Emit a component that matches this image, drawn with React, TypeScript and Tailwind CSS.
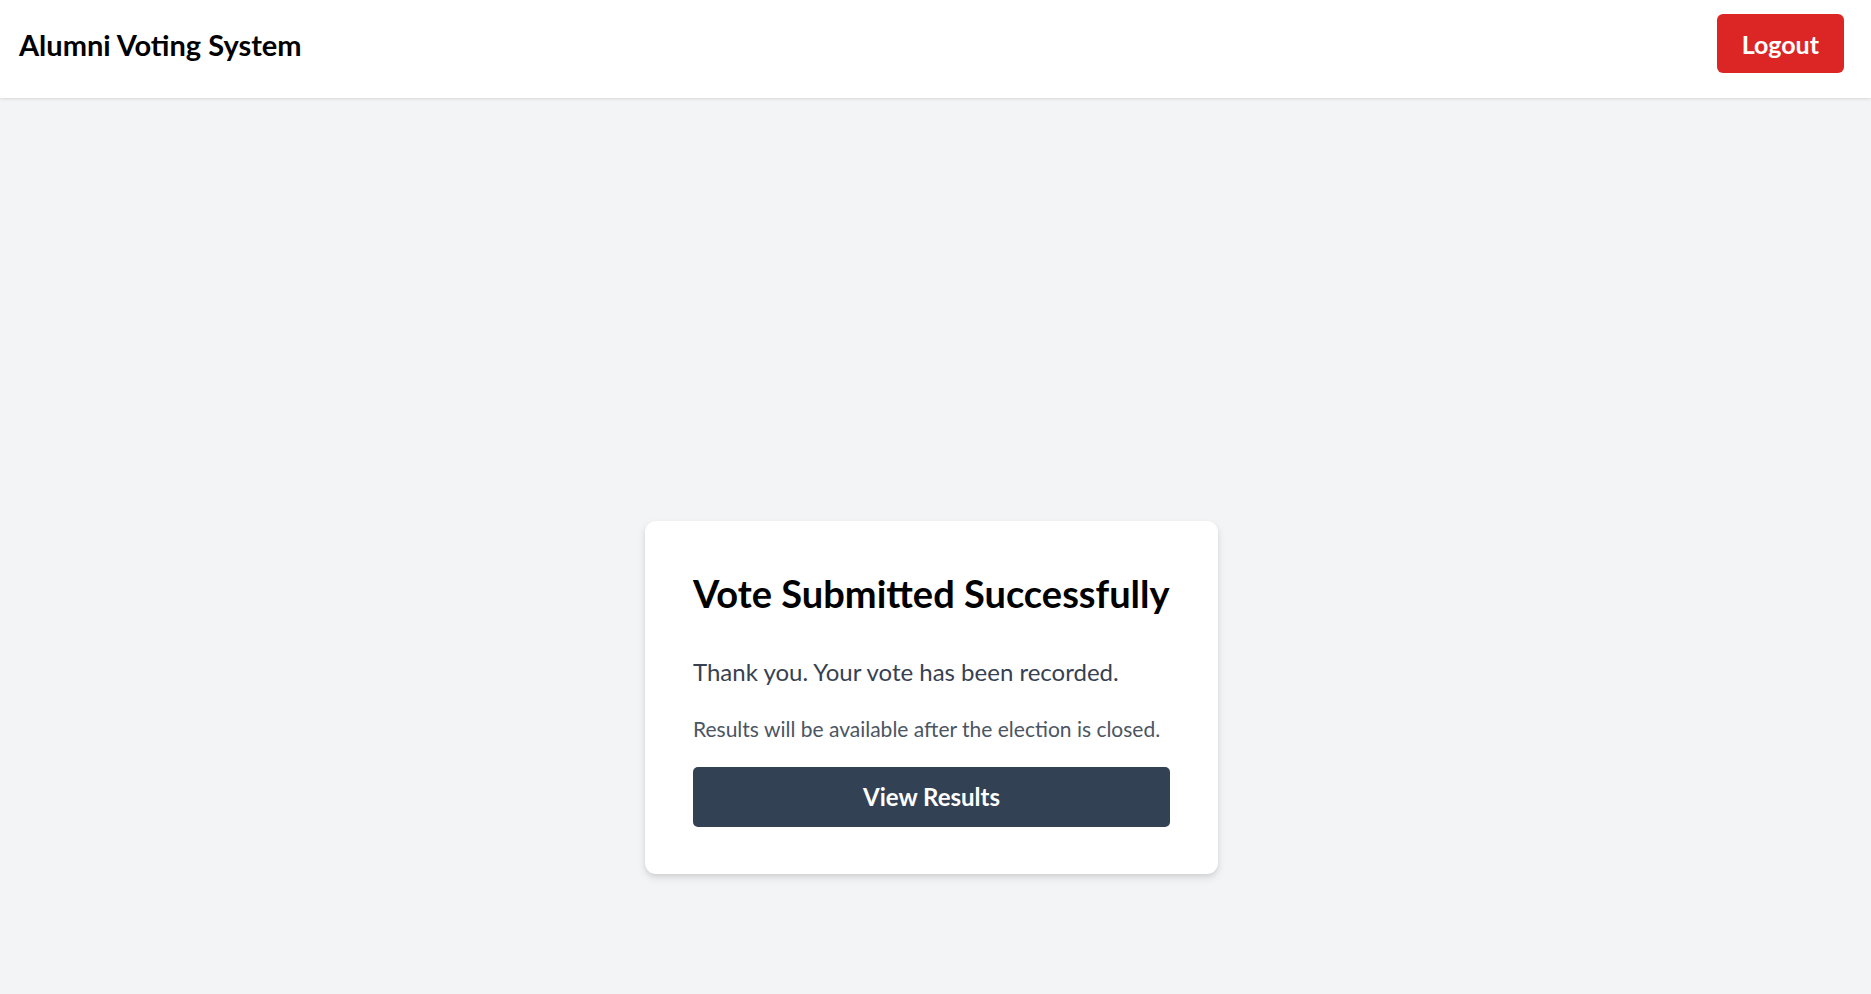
export default function App() {
  return (
    <div className="min-h-screen bg-[#f3f4f6] font-['Lato',sans-serif]">
      <header className="bg-white shadow-[0_1px_3px_rgba(0,0,0,0.12)] flex items-center justify-between pl-[19px] pr-[27px] pt-[14px] pb-[25px]">
        <h1 className="text-[29px] font-bold text-black leading-none pt-[2px]">Alumni Voting System</h1>
        <button className="h-[59px] px-[25px] pt-[2px] rounded-[6px] bg-[#dc2626] text-white text-[25px] font-bold">
          Logout
        </button>
      </header>

      <main className="flex justify-center pt-[423px] pr-[8px] pb-[120px]">
        <div className="w-[573px] bg-white rounded-[11px] shadow-[0_4px_8px_rgba(0,0,0,0.1),0_2px_4px_rgba(0,0,0,0.06)] px-[48px] pt-[49px] pb-[47px] whitespace-nowrap">
          <h2 className="text-[38px] font-bold text-black leading-[46px]">Vote Submitted Successfully</h2>
          <p className="mt-[40px] text-[24px] text-[#374151] leading-[32px]">Thank you. Your vote has been recorded.</p>
          <p className="mt-[27px] text-[21px] text-[#4b5563] leading-[28px]">
            Results will be available after the election is closed.
          </p>
          <button className="mt-[24px] w-full h-[60px] rounded-[5px] bg-[#334155] text-white text-[24px] font-bold">
            View Results
          </button>
        </div>
      </main>
    </div>
  );
}
